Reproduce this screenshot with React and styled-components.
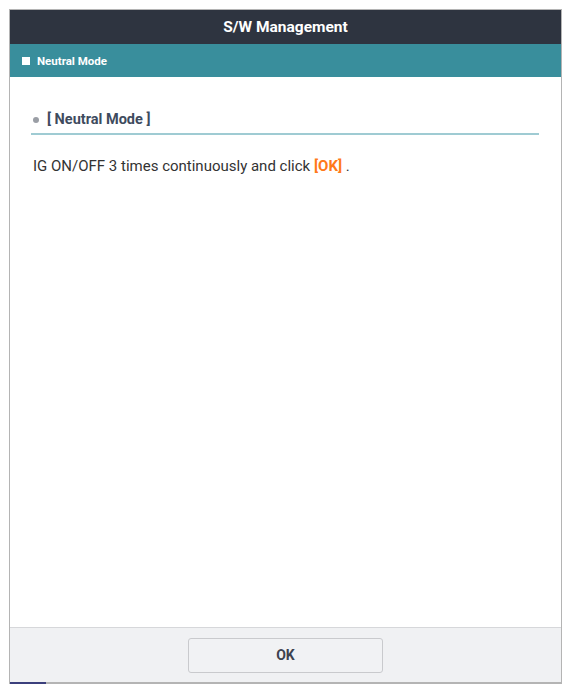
import React from "react";
import styled, { createGlobalStyle } from "styled-components";

const GlobalStyle = createGlobalStyle`
  html, body { margin: 0; padding: 0; background: #ffffff; }
  body { font-family: Roboto, "Noto Sans", "Liberation Sans", sans-serif; }
  * { box-sizing: border-box; }
`;

const Frame = styled.div`
  position: relative;
  margin: 9px 0 0 9px;
  width: 553px;
  height: 675px;
  display: flex;
  flex-direction: column;
  border: 1px solid #b4b4b4;
  border-bottom-width: 2px;
  background: #ffffff;
  &::after {
    content: "";
    position: absolute;
    left: 0;
    bottom: -2px;
    width: 36px;
    height: 2px;
    background: #3b3f7c;
  }
`;

const TitleBar = styled.div`
  height: 34px;
  background: #2e3440;
  display: flex;
  align-items: center;
  justify-content: center;
  color: #ffffff;
  font-weight: 700;
  font-size: 15.5px;
`;

const SectionBar = styled.div`
  height: 33px;
  background: #398e9c;
  display: flex;
  align-items: center;
  gap: 7px;
  padding-left: 12px;
  color: #ffffff;
  font-weight: 700;
  font-size: 11.5px;
`;

const Square = styled.span`
  width: 8px;
  height: 8px;
  background: #ffffff;
`;

const Content = styled.div`
  flex: 1;
  padding: 33px 22px 0 21px;
`;

const Heading = styled.div`
  display: flex;
  align-items: center;
  gap: 8px;
  padding: 0 0 3px 2px;
  border-bottom: 2px solid #9fcbd3;
  color: #3e4b5e;
  font-weight: 700;
  font-size: 14.5px;
  line-height: 20px;
`;

const Dot = styled.span`
  width: 6px;
  height: 6px;
  border-radius: 50%;
  background: #9a9ea5;
`;

const Body = styled.p`
  margin: 21px 0 0 2px;
  color: #333333;
  font-size: 15px;
  line-height: 20px;
`;

const Highlight = styled.span`
  color: #ff7a1a;
  font-weight: 700;
`;

const Footer = styled.div`
  height: 55px;
  border-top: 1px solid #d6d7da;
  background: #f0f1f3;
  display: flex;
  align-items: center;
  justify-content: center;
`;

const Button = styled.button`
  width: 195px;
  height: 35px;
  border: 1px solid #c9cacd;
  border-radius: 3px;
  background: #f1f2f4;
  color: #3d4350;
  font-family: Roboto, "Noto Sans", sans-serif;
  font-weight: 700;
  font-size: 14px;
  cursor: pointer;
`;

export default function App() {
  return (
    <>
      <GlobalStyle />
      <Frame>
        <TitleBar>S/W Management</TitleBar>
        <SectionBar>
          <Square />
          Neutral Mode
        </SectionBar>
        <Content>
          <Heading>
            <Dot />[ Neutral Mode ]
          </Heading>
          <Body>
            IG ON/OFF 3 times continuously and click <Highlight>[OK]</Highlight> .
          </Body>
        </Content>
        <Footer>
          <Button>OK</Button>
        </Footer>
      </Frame>
    </>
  );
}
